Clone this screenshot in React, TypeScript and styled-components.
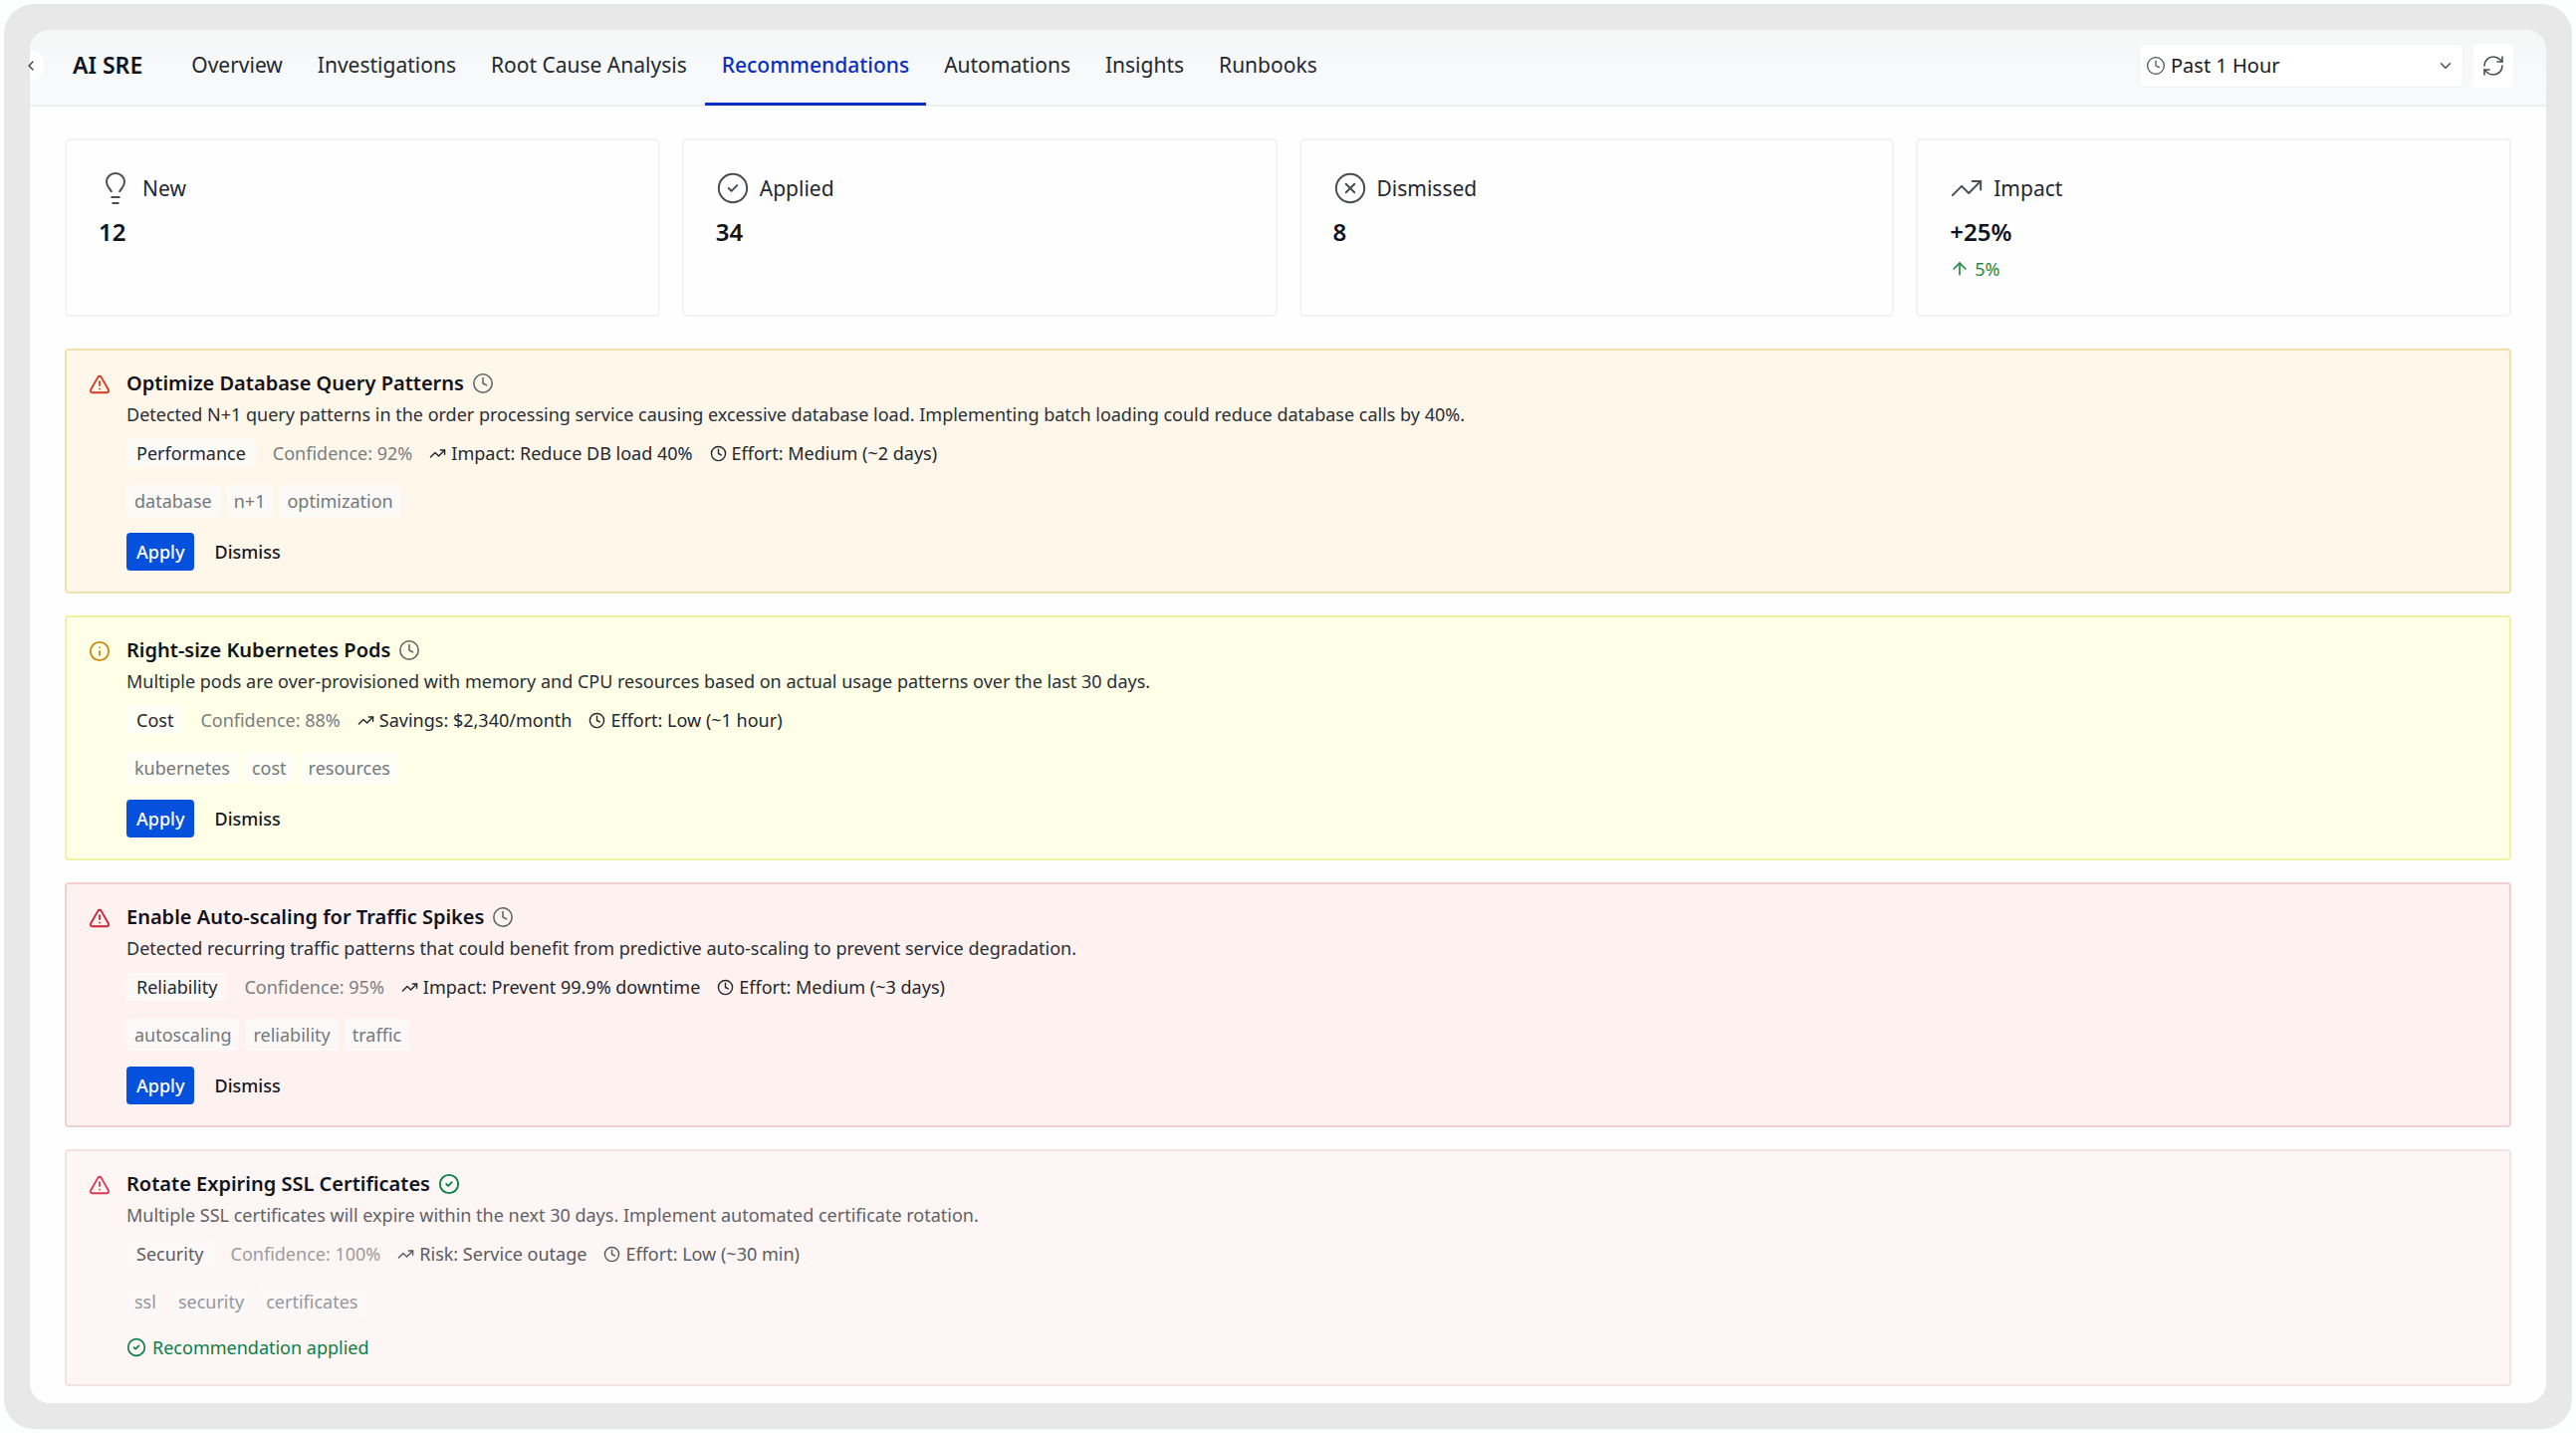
import React from "react";
import styled, { createGlobalStyle } from "styled-components";
import {
  ArrowUp, ChevronDown, ChevronLeft, CircleCheck, CircleX, Clock, Info, RefreshCw, TrendingUp, TriangleAlert,
} from "lucide-react";

const Global = createGlobalStyle`
  *, *::before, *::after { box-sizing: border-box; }
  body { margin: 0; background: #fdfefe; color: #11141c; font-family: "Noto Sans", sans-serif; font-size: 18px; line-height: 28px; }
  button, select { font: inherit; color: inherit; }
  h1, h2, p, ul { margin: 0; padding: 0; }
  svg { display: block; flex: none; }
`;

const Frame = styled.div`
  min-height: calc(100vh - 8px);
  margin: 4px;
  padding: 26px;
  border-radius: 30px;
  background: #e8e8e8;
  display: flex;
`;

const Panel = styled.div`
  flex: 1;
  min-width: 0;
  background: #fefefe;
  border-radius: 20px;
  padding-bottom: 14px;
`;

const Header = styled.header`
  display: flex;
  align-items: center;
  height: 77px;
  padding-right: 33px;
  border-radius: 20px 20px 0 0;
  background: linear-gradient(#f5f7f7, #f9fafc);
  border-bottom: 2px solid #eceff2;
`;

const Collapse = styled.button`
  width: 14px;
  height: 30px;
  padding: 0;
  border: 0;
  border-radius: 0 15px 15px 0;
  background: #ffffff;
  color: #3c4046;
  display: flex;
  align-items: center;
  margin-bottom: 4px;
  & svg { margin-left: -7px; }
`;

const Brand = styled.h1`
  margin-left: 29px;
  margin-right: 32px;
  font-size: 23px;
  font-weight: 600;
  line-height: 30px;
  padding-bottom: 6px;
  white-space: nowrap;
`;

const Tabs = styled.nav`
  display: flex;
  gap: 1px;
  align-self: stretch;
  margin-bottom: -1px;
`;

const Tab = styled.a<{ $active?: boolean }>`
  display: flex;
  align-items: center;
  padding: 0 17px 3px;
  font-size: 21px;
  text-decoration: none;
  white-space: nowrap;
  color: ${(p) => (p.$active ? "#0a2fc4" : "#24282f")};
  font-weight: ${(p) => (p.$active ? 500 : 400)};
  border-bottom: 3px solid ${(p) => (p.$active ? "#0a2fc4" : "transparent")};
`;

const Tools = styled.div`
  display: flex;
  gap: 10px;
  margin-left: auto;
  padding-bottom: 4px;
`;

const Range = styled.label`
  display: grid;
  grid-template-columns: 20px 1fr 18px;
  align-items: center;
  gap: 5px;
  width: 326px;
  height: 44px;
  padding: 0 8px 0 6px;
  background: #ffffff;
  border: 1px solid #eff1f3;
  border-radius: 4px;
  color: #4a4e54;
`;

const RangeSelect = styled.select`
  appearance: none;
  border: 0;
  padding: 0;
  background: transparent;
  font-size: 20px;
  color: #181b20;
`;

const Refresh = styled.button`
  width: 40px;
  height: 44px;
  padding: 0;
  display: grid;
  place-items: center;
  border: 0;
  border-radius: 4px;
  background: #ffffff;
  color: #4a4e54;
`;

const Main = styled.main`
  padding: 32px 35px 0;
`;

const Stats = styled.section`
  display: grid;
  grid-template-columns: repeat(4, 1fr);
  gap: 22px;
  margin-bottom: 32px;
`;

const Stat = styled.article`
  min-height: 179px;
  padding: 31px 32px 20px;
  border: 2px solid #f1f2f4;
  border-radius: 5px;
`;

const StatName = styled.h2`
  display: flex;
  align-items: center;
  gap: 10px;
  font-size: 21px;
  font-weight: 400;
  line-height: 34px;
  color: #24282f;
  & svg { color: #4a4d50; }
`;

const StatValue = styled.p`
  margin-top: 10px;
  font-size: 24px;
  font-weight: 600;
  line-height: 34px;
`;

const Trend = styled.p`
  display: flex;
  align-items: center;
  gap: 5px;
  margin-top: 7px;
  font-size: 18px;
  line-height: 26px;
  color: #1f8a43;
`;

const List = styled.section`
  display: grid;
  gap: 22px;
`;

const tones = {
  orange: { bg: "#fef7ea", line: "#f1dfac", icon: "#d9381e" },
  yellow: { bg: "#feffe6", line: "#eef3a4", icon: "#d08a10" },
  red: { bg: "#fef2f1", line: "#f0cfd1", icon: "#cf1f32" },
  faded: { bg: "#fef5f5", line: "#f5e3e4", icon: "#d93a52" },
};
type Tone = keyof typeof tones;

const Card = styled.article<{ $tone: Tone }>`
  display: flex;
  gap: 16px;
  padding: 19px 22px 21px;
  border: 2px solid ${(p) => tones[p.$tone].line};
  border-radius: 4px;
  background: ${(p) => tones[p.$tone].bg};
`;

const Severity = styled.span<{ $tone: Tone }>`
  padding-top: 4px;
  color: ${(p) => tones[p.$tone].icon};
`;

const Title = styled.h2<{ $done: boolean }>`
  display: flex;
  align-items: center;
  gap: 8px;
  font-size: 20px;
  font-weight: 600;
  line-height: 28px;
  & svg { color: ${(p) => (p.$done ? "#0a8048" : "#606366")}; }
`;

const Details = styled.div<{ $done: boolean }>`
  opacity: ${(p) => (p.$done ? 0.75 : 1)};
`;

const Text = styled.p`
  margin-top: 3px;
  color: #2b2f35;
`;

const Meta = styled.div`
  display: flex;
  align-items: center;
  margin-top: 11px;
  gap: 17px;
  color: #24282f;
`;

const Badge = styled.span`
  padding: 0 10px;
  border-radius: 4px;
  background: rgba(250, 251, 253, 0.6);
`;

const Confidence = styled.span`
  color: #7b7e82;
`;

const Fact = styled.span`
  display: flex;
  align-items: center;
  gap: 5px;
`;

const Tags = styled.ul`
  display: flex;
  gap: 6px;
  margin-top: 18px;
  list-style: none;
  color: #74787e;
`;

const Tag = styled.li`
  padding: 2px 8px;
  border-radius: 4px;
  background: rgba(250, 251, 253, 0.6);
`;

const Actions = styled.div`
  display: flex;
  gap: 10px;
  margin-top: 16px;
`;

const Action = styled.button<{ $primary?: boolean }>`
  height: 38px;
  padding: 0 10px;
  border: 0;
  border-radius: 4px;
  font-weight: 500;
  background: ${(p) => (p.$primary ? "#0550dc" : "transparent")};
  color: ${(p) => (p.$primary ? "#ffffff" : "#16191e")};
`;

const Applied = styled.p`
  display: flex;
  align-items: center;
  gap: 6px;
  margin-top: 14px;
  line-height: 32px;
  color: #0a8048;
`;

/* Outline bulb with an open neck and two base bars. */
const Bulb = () => (
  <svg width="34" height="34" viewBox="0 0 34 34" fill="none" stroke="currentColor" strokeWidth="2">
    <path d="M13 21c-.4-3-5-4.600-5-10.500a9 8.500 0 0 1 18 0C26 16.400 21.400 18 21 21" />
    <path d="M12.500 26h9M13.500 32h7" />
  </svg>
);

const recommendations = [
  {
    tone: "orange" as Tone, title: "Optimize Database Query Patterns",
    text: "Detected N+1 query patterns in the order processing service causing excessive database load. Implementing batch loading could reduce database calls by 40%.",
    category: "Performance", confidence: "92%", gain: "Impact: Reduce DB load 40%", effort: "Medium (~2 days)",
    tags: ["database", "n+1", "optimization"], done: false,
  },
  {
    tone: "yellow" as Tone, title: "Right-size Kubernetes Pods",
    text: "Multiple pods are over-provisioned with memory and CPU resources based on actual usage patterns over the last 30 days.",
    category: "Cost", confidence: "88%", gain: "Savings: $2,340/month", effort: "Low (~1 hour)",
    tags: ["kubernetes", "cost", "resources"], done: false,
  },
  {
    tone: "red" as Tone, title: "Enable Auto-scaling for Traffic Spikes",
    text: "Detected recurring traffic patterns that could benefit from predictive auto-scaling to prevent service degradation.",
    category: "Reliability", confidence: "95%", gain: "Impact: Prevent 99.9% downtime", effort: "Medium (~3 days)",
    tags: ["autoscaling", "reliability", "traffic"], done: false,
  },
  {
    tone: "faded" as Tone, title: "Rotate Expiring SSL Certificates",
    text: "Multiple SSL certificates will expire within the next 30 days. Implement automated certificate rotation.",
    category: "Security", confidence: "100%", gain: "Risk: Service outage", effort: "Low (~30 min)",
    tags: ["ssl", "security", "certificates"], done: true,
  },
];

const tabs = ["Overview", "Investigations", "Root Cause Analysis", "Recommendations", "Automations", "Insights", "Runbooks"];

export default function App() {
  return (
    <>
      <Global />
      <Frame>
        <Panel>
          <Header>
            <Collapse aria-label="Collapse sidebar"><ChevronLeft size={16} /></Collapse>
            <Brand>AI SRE</Brand>
            <Tabs>
              {tabs.map((t) => (
                <Tab key={t} href="#" $active={t === "Recommendations"}>{t}</Tab>
              ))}
            </Tabs>
            <Tools>
              <Range>
                <Clock size={20} strokeWidth={1.5} />
                <RangeSelect aria-label="Time range"><option>Past 1 Hour</option></RangeSelect>
                <ChevronDown size={18} />
              </Range>
              <Refresh aria-label="Refresh"><RefreshCw size={24} strokeWidth={1.6} /></Refresh>
            </Tools>
          </Header>
          <Main>
            <Stats>
              <Stat><StatName><Bulb />New</StatName><StatValue>12</StatValue></Stat>
              <Stat><StatName><CircleCheck size={34} strokeWidth={1.4} />Applied</StatName><StatValue>34</StatValue></Stat>
              <Stat><StatName><CircleX size={34} strokeWidth={1.4} />Dismissed</StatName><StatValue>8</StatValue></Stat>
              <Stat>
                <StatName><TrendingUp size={34} strokeWidth={1.4} />Impact</StatName>
                <StatValue>+25%</StatValue>
                <Trend><ArrowUp size={20} />5%</Trend>
              </Stat>
            </Stats>
            <List>
              {recommendations.map((r) => (
                <Card key={r.title} $tone={r.tone}>
                  <Severity $tone={r.tone}>
                    {r.tone === "yellow" ? <Info size={22} /> : <TriangleAlert size={22} />}
                  </Severity>
                  <div>
                    <Title $done={r.done}>
                      {r.title}
                      {r.done ? <CircleCheck size={22} /> : <Clock size={22} strokeWidth={1.7} />}
                    </Title>
                    <Details $done={r.done}>
                      <Text>{r.text}</Text>
                      <Meta>
                        <Badge>{r.category}</Badge>
                        <Confidence>Confidence: {r.confidence}</Confidence>
                        <Fact><TrendingUp size={17} />{r.gain}</Fact>
                        <Fact><Clock size={17} />Effort: {r.effort}</Fact>
                      </Meta>
                      <Tags>{r.tags.map((t) => <Tag key={t}>{t}</Tag>)}</Tags>
                    </Details>
                    {r.done ? (
                      <Applied><CircleCheck size={20} />Recommendation applied</Applied>
                    ) : (
                      <Actions><Action $primary>Apply</Action><Action>Dismiss</Action></Actions>
                    )}
                  </div>
                </Card>
              ))}
            </List>
          </Main>
        </Panel>
      </Frame>
    </>
  );
}
